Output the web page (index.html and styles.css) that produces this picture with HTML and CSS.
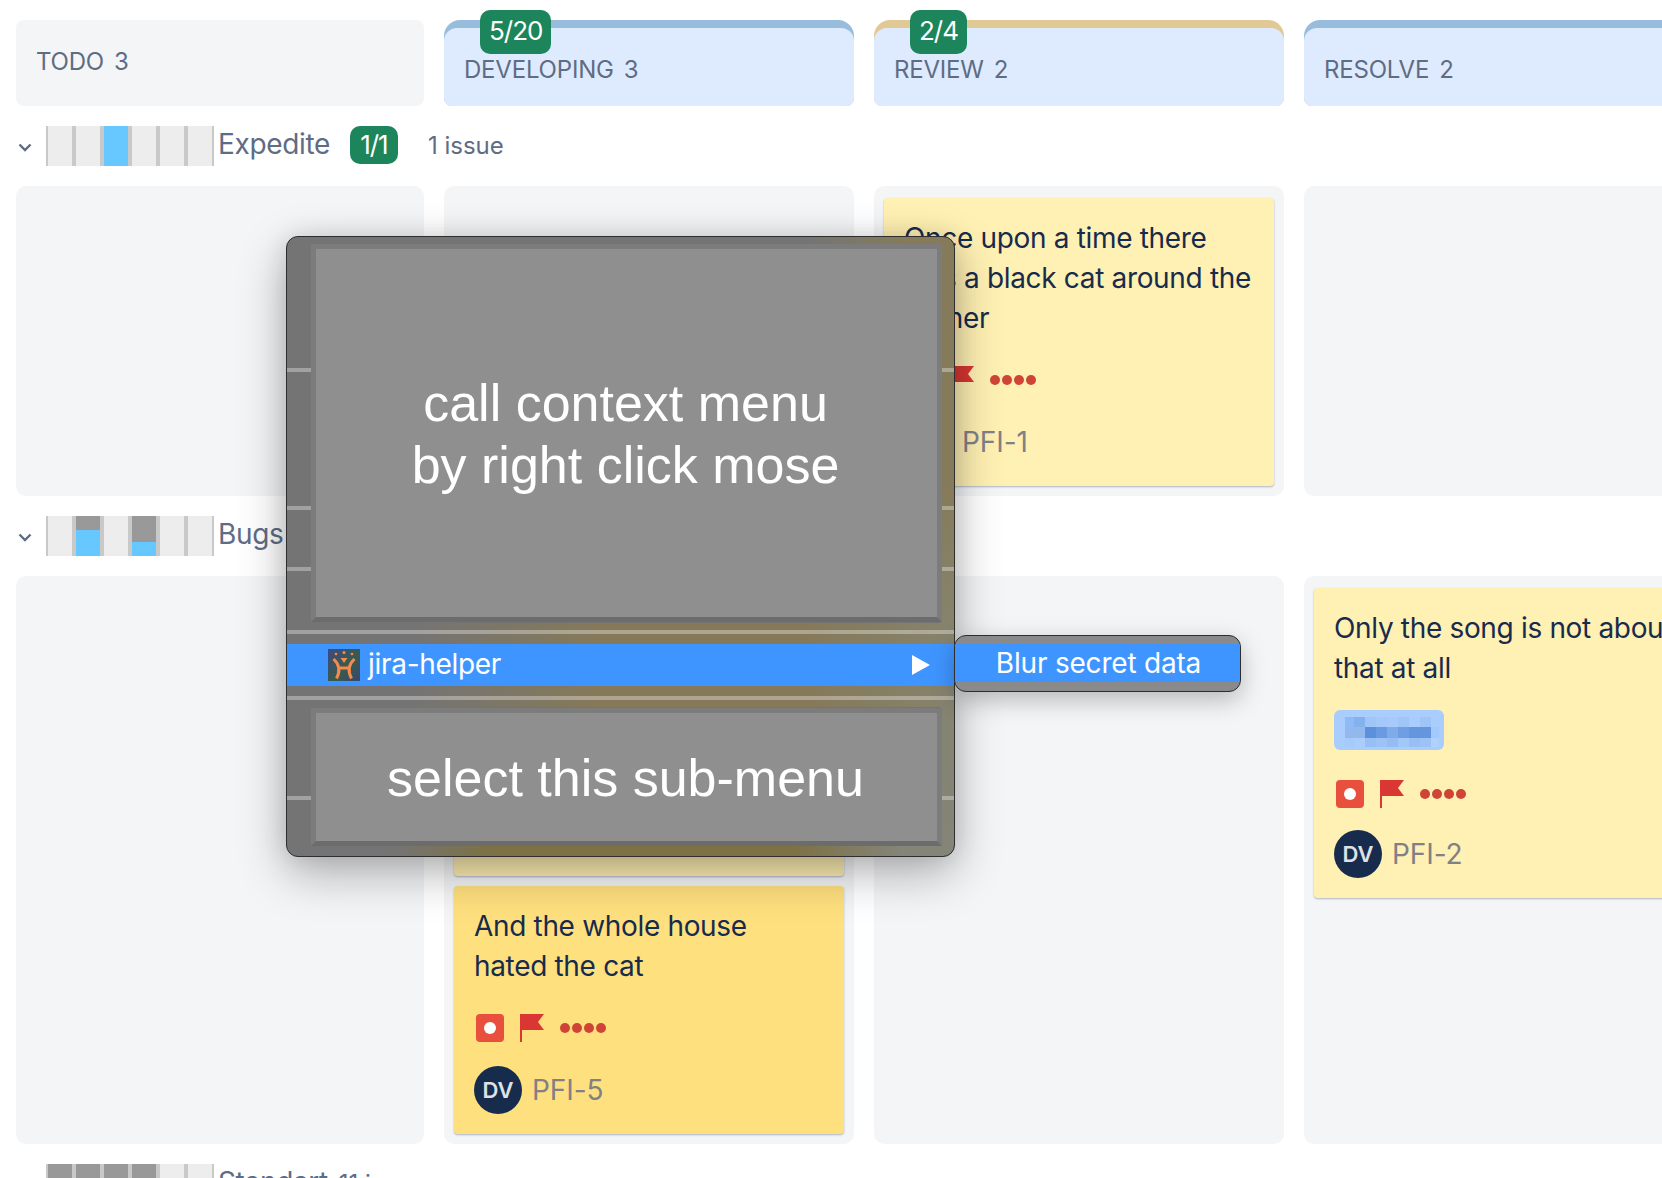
FILE: index.html
```html
<!DOCTYPE html>
<html lang="en">
<head>
  <meta charset="UTF-8">
  <title>Board</title>
  <link rel="stylesheet" href="styles.css">
</head>
<body>
  <div class="board">
    <div class="row">
      <div class="col-head plain"><div class="head-inner">Todo<span class="count">3</span></div></div>
      <div class="col-head blue">
        <span class="badge wip">5/20</span>
        <div class="head-inner">Developing<span class="count">3</span></div>
      </div>
      <div class="col-head sand">
        <span class="badge wip">2/4</span>
        <div class="head-inner">Review<span class="count">2</span></div>
      </div>
      <div class="col-head blue"><div class="head-inner">Resolve<span class="count">2</span></div></div>
    </div>

    <div class="lane">
      <svg class="chevron" width="14" height="9" viewBox="0 0 14 9"><path d="M1.5 1.5 7 7l5.5-5.5" fill="none" stroke="#5e6c84" stroke-width="2.4"/></svg>
      <div class="bar">
        <div class="cell"></div><div class="cell"></div>
        <div class="cell"><div class="fill blue-fill full"></div></div>
        <div class="cell"></div><div class="cell"></div><div class="cell"></div>
      </div>
      <span class="lane-name">Expedite</span>
      <span class="badge lane-badge">1/1</span>
      <span class="lane-issues">1 issue</span>
    </div>

    <div class="row">
      <div class="col"></div>
      <div class="col"></div>
      <div class="col">
        <div class="card pale">
          <p class="summary">Once upon a time there was a black cat around the corner</p>
          <div class="marks">
            <span class="prio"></span>
            <svg class="flag" width="24" height="28" viewBox="0 0 24 28"><path d="M0 0H24L18 8 24 16H2V28H0Z"/></svg>
            <span class="dots"><i></i><i></i><i></i><i></i></span>
          </div>
          <div class="who"><span class="avatar">DV</span><span class="key">PFI-1</span></div>
        </div>
      </div>
      <div class="col"></div>
    </div>

    <div class="lane">
      <svg class="chevron" width="14" height="9" viewBox="0 0 14 9"><path d="M1.5 1.5 7 7l5.5-5.5" fill="none" stroke="#5e6c84" stroke-width="2.4"/></svg>
      <div class="bar">
        <div class="cell"></div>
        <div class="cell"><div class="fill gray-fill third"></div><div class="fill blue-fill"></div></div>
        <div class="cell"></div>
        <div class="cell"><div class="fill gray-fill two-thirds"></div><div class="fill blue-fill"></div></div>
        <div class="cell"></div><div class="cell"></div>
      </div>
      <span class="lane-name">Bugs</span>
    </div>

    <div class="row">
      <div class="col"></div>
      <div class="col stack">
        <div class="card pale"></div>
        <div class="card deep">
          <p class="summary">And the whole house hated the cat</p>
          <div class="marks">
            <span class="prio"></span>
            <svg class="flag" width="24" height="28" viewBox="0 0 24 28"><path d="M0 0H24L18 8 24 16H2V28H0Z"/></svg>
            <span class="dots"><i></i><i></i><i></i><i></i></span>
          </div>
          <div class="who"><span class="avatar">DV</span><span class="key">PFI-5</span></div>
        </div>
      </div>
      <div class="col"></div>
      <div class="col">
        <div class="card pale">
          <p class="summary">Only the song is not about that at all</p>
          <div class="epic">
            <svg width="94" height="30" viewBox="0 0 94 30" shape-rendering="crispEdges">
              <rect x="0" y="0" width="9" height="10" fill="#8fbaf4"/><rect x="9" y="0" width="11" height="10" fill="#85b2ef"/>
              <rect x="20" y="0" width="11" height="10" fill="#a0c6f8"/><rect x="31" y="0" width="11" height="10" fill="#a3c8f9"/>
              <rect x="42" y="0" width="11" height="10" fill="#a6cafb"/><rect x="53" y="0" width="11" height="10" fill="#a0c5f8"/>
              <rect x="64" y="0" width="11" height="10" fill="#a8ccfc"/><rect x="75" y="0" width="11" height="10" fill="#9fc4f7"/>
              <rect x="86" y="0" width="8" height="10" fill="#a9cdfd"/>
              <rect x="0" y="10" width="20" height="11" fill="#93b8ed"/><rect x="20" y="10" width="11" height="11" fill="#5b91dc"/>
              <rect x="31" y="10" width="11" height="11" fill="#6a9be0"/><rect x="42" y="10" width="11" height="11" fill="#7fabe8"/>
              <rect x="53" y="10" width="11" height="11" fill="#6f9fe2"/><rect x="64" y="10" width="22" height="11" fill="#6396de"/>
              <rect x="86" y="10" width="8" height="11" fill="#a4c9fb"/>
              <rect x="0" y="21" width="9" height="9" fill="#a6cafc"/><rect x="9" y="21" width="11" height="9" fill="#abcdfc"/>
              <rect x="20" y="21" width="11" height="9" fill="#98bff4"/><rect x="31" y="21" width="11" height="9" fill="#9cc2f6"/>
              <rect x="42" y="21" width="11" height="9" fill="#96bdf3"/><rect x="53" y="21" width="11" height="9" fill="#a2c7f9"/>
              <rect x="64" y="21" width="11" height="9" fill="#98bff4"/><rect x="75" y="21" width="11" height="9" fill="#9dc3f6"/>
              <rect x="86" y="21" width="8" height="9" fill="#b0d0fe"/>
            </svg>
          </div>
          <div class="marks after-epic">
            <span class="prio"></span>
            <svg class="flag" width="24" height="28" viewBox="0 0 24 28"><path d="M0 0H24L18 8 24 16H2V28H0Z"/></svg>
            <span class="dots"><i></i><i></i><i></i><i></i></span>
          </div>
          <div class="who after-epic-who"><span class="avatar">DV</span><span class="key">PFI-2</span></div>
        </div>
      </div>
    </div>

    <div class="lane">
      <svg class="chevron" width="14" height="9" viewBox="0 0 14 9"><path d="M1.5 1.5 7 7l5.5-5.5" fill="none" stroke="#5e6c84" stroke-width="2.4"/></svg>
      <div class="bar">
        <div class="cell"><div class="fill gray-fill full"></div></div>
        <div class="cell"><div class="fill gray-fill full"></div></div>
        <div class="cell"><div class="fill gray-fill full"></div></div>
        <div class="cell"><div class="fill gray-fill full"></div></div>
        <div class="cell"></div><div class="cell"></div>
      </div>
      <span class="lane-name">Standart</span>
      <span class="lane-issues tight">11 issues</span>
    </div>
  </div>

  <div class="menu">
    <div class="section top">
      <div class="gutter left">
        <span class="tick t1"></span><span class="tick t2"></span><span class="tick t3"></span>
      </div>
      <div class="note">call context menu<br>by right click mose</div>
      <div class="gutter right">
        <span class="tick t1"></span><span class="tick t2"></span><span class="tick t3"></span>
      </div>
    </div>
    <div class="sep"></div>
    <div class="item">
      <svg class="app-icon" width="32" height="32" viewBox="0 0 32 32">
        <defs>
          <linearGradient id="iconBg" x1="0" y1="0" x2="1" y2="1">
            <stop offset="0" stop-color="#3a4a86"/>
            <stop offset="0.55" stop-color="#3b5a4c"/>
            <stop offset="1" stop-color="#37486e"/>
          </linearGradient>
        </defs>
        <rect width="32" height="32" fill="url(#iconBg)"/>
        <g fill="#f58a4c">
          <circle cx="8" cy="5" r="1.300"/><circle cx="16" cy="3.500" r="1.500"/><circle cx="24" cy="5" r="1.300"/>
          <path d="M12.500 9H19.500L16 14Z"/>
        </g>
        <g fill="none" stroke="#f58a4c" stroke-width="3">
          <path d="M5.500 10C11 15 13 21 8.500 29.500"/>
          <path d="M26.500 10C21 15 19 21 23.500 29.500"/>
          <path d="M12 19H20"/>
        </g>
      </svg>
      <span class="item-name">jira-helper</span>
      <svg class="arrow" width="18" height="20" viewBox="0 0 18 20"><path d="M0 0 18 10 0 20Z" fill="#fff"/></svg>
    </div>
    <div class="sep"></div>
    <div class="section bottom">
      <div class="gutter left"><span class="tick t4"></span></div>
      <div class="note small">select this sub-menu</div>
      <div class="gutter right"><span class="tick t4"></span></div>
    </div>
  </div>

  <div class="submenu">
    <div class="sub-item">Blur secret data</div>
  </div>
</body>
</html>
```

FILE: styles.css
```css
html, body {
  margin: 0;
  height: 100%;
  overflow: hidden;
  background-color: #fff;
}

body {
  font-family: Inter, "Noto Sans", sans-serif;
  color: #172b4d;
}

.board {
  display: flex;
  flex-direction: column;
  gap: 20px;
  width: 1700px;
  padding: 20px 0 0 16px;
}

.row {
  display: grid;
  grid-template-columns: 408px 410px 410px 410px;
  gap: 20px;
}

/* column headers */
.col-head {
  position: relative;
  height: 86px;
  box-sizing: border-box;
  border-radius: 16px 16px 8px 8px;
  font-size: 24px;
  line-height: 32px;
  letter-spacing: -0.2px;
  color: #5e6c84;
  text-transform: uppercase;
}

.col-head.plain {
  background-color: #f4f5f7;
  border-radius: 8px;
}

.col-head.blue {
  background-color: #97bcdc;
  padding-top: 8px;
}

.col-head.sand {
  background-color: #e0c994;
  padding-top: 8px;
}

.head-inner {
  height: 100%;
  box-sizing: border-box;
  padding: 26px 20px 0;
  background-color: #deebff;
  border-radius: 13px 13px 8px 8px;
}

.plain .head-inner {
  background-color: transparent;
}

.count {
  margin-left: 10px;
}

.badge {
  display: inline-block;
  box-sizing: border-box;
  background-color: #1c855c;
  color: #fff;
  font-size: 26px;
  letter-spacing: -1px;
  text-align: center;
  border-radius: 10px;
}

.badge.wip {
  position: absolute;
  top: -10px;
  left: 36px;
  height: 44px;
  line-height: 42px;
  padding: 0 9px;
}

/* swimlanes */
.lane {
  display: flex;
  align-items: center;
  height: 40px;
}

.chevron {
  width: 14px;
  margin: 2px 14px 0 2px;
  flex: none;
}

.bar {
  display: flex;
  height: 40px;
  flex: none;
}

.cell {
  display: flex;
  flex-direction: column;
  width: 24px;
  border: solid #c9c9c9;
  border-width: 0 2px;
  background-color: #ededed;
}

.fill.full {
  flex: 1;
}

.fill.blue-fill {
  flex: 1;
  background-color: #66c8ff;
}

.fill.gray-fill {
  background-color: #999;
}

.fill.third {
  height: 14px;
}

.fill.two-thirds {
  height: 26px;
}

.lane-name {
  margin: 0 0 4px 4px;
  font-size: 28px;
  letter-spacing: -0.35px;
  color: #5e6c84;
}

.lane-badge {
  align-self: flex-start;
  height: 38px;
  line-height: 38px;
  width: 48px;
  margin-left: 20px;
}

.lane-issues {
  margin: 0 0 2px 30px;
  font-size: 24px;
  color: #5e6c84;
}

.lane-issues.tight {
  margin-left: 11px;
}

/* cells and cards */
.col {
  background-color: #f4f5f7;
  border-radius: 10px;
  padding: 12px 10px 10px;
}

.col.stack {
  display: flex;
  flex-direction: column;
  gap: 10px;
}

.card {
  box-sizing: border-box;
  padding: 20px;
  height: 288px;
  border-radius: 4px;
  box-shadow: 0 1px 2px rgba(9, 30, 66, 0.3);
}

.stack .card + .card {
  height: 248px;
}

.card.pale {
  background-color: #fff0b3;
}

.card.deep {
  background-color: #ffe07f;
}

.col:last-child .card {
  height: 310px;
}

.summary {
  margin: 0;
  font-size: 28px;
  line-height: 40px;
  letter-spacing: -0.33px;
}

.marks {
  display: flex;
  align-items: center;
  gap: 16px;
  height: 28px;
  margin: 28px 0 0 2px;
}

.marks.after-epic {
  margin-top: 30px;
}

.prio {
  position: relative;
  width: 28px;
  height: 28px;
  border-radius: 4px;
  background-color: #e94f3d;
}

.prio::after {
  content: "";
  position: absolute;
  left: 8px;
  top: 8px;
  width: 12px;
  height: 12px;
  border-radius: 50%;
  background-color: #fff;
}

.flag {
  fill: #da3633;
}

.dots {
  display: flex;
  gap: 2px;
}

.dots i {
  width: 10px;
  height: 10px;
  border-radius: 50%;
  background-color: #d04437;
}

.who {
  display: flex;
  align-items: center;
  gap: 10px;
  margin-top: 24px;
}

.who.after-epic-who {
  margin-top: 22px;
}

.avatar {
  display: flex;
  align-items: center;
  justify-content: center;
  width: 48px;
  height: 48px;
  border-radius: 50%;
  background-color: #172b4d;
  color: #dfe1e6;
  font-size: 22px;
  font-weight: 600;
}

.key {
  font-size: 28px;
  letter-spacing: -0.1px;
  color: #808086;
}

.epic {
  display: flex;
  width: 110px;
  height: 40px;
  box-sizing: border-box;
  margin-top: 22px;
  padding: 7px 5px 3px 11px;
  border-radius: 6px;
  background-color: #a9cdfd;
}

/* context menu annotation lying over the board.
   the tints are the cards that would show through a frosted menu */
.menu {
  position: absolute;
  left: 286px;
  top: 236px;
  width: 669px;
  height: 621px;
  box-sizing: border-box;
  border: 1px solid #2e2e2e;
  border-radius: 12px;
  background-color: #747474;
  background-image:
    linear-gradient(90deg, transparent 78%, #857b5a 92%),
    linear-gradient(180deg, #857b5a 0, #857b5a 40%, #86836c 62%, #848478 100%),
    linear-gradient(90deg, transparent 18%, #85795a 46%, #85795a 78%, #86836c 100%),
    linear-gradient(90deg, transparent 16%, #7d7145 30%, #7d7145 76%, #848478 92%);
  background-repeat: no-repeat;
  background-size: 100% 10px, 14px 100%, 100% 84px, 100% 12px;
  background-position: 0 0, 100% 0, 0 386px, 0 100%;
  box-shadow: 0 16px 48px rgba(0, 0, 0, 0.3), 0 0 24px rgba(0, 0, 0, 0.1);
  overflow: hidden;
}

.section {
  display: flex;
}

.section.top {
  height: 393px;
  padding-top: 7px;
  box-sizing: border-box;
}

.section.bottom {
  padding-top: 8px;
}

.gutter {
  display: flex;
  flex-direction: column;
  flex: none;
}

.gutter.left {
  width: 24px;
}

.gutter.right {
  width: 12px;
}

.tick {
  display: block;
  height: 4px;
  background-color: rgba(255, 255, 255, 0.33);
}

.tick.t1 {
  margin-top: 124px;
}

.tick.t2 {
  margin-top: 134px;
}

.tick.t3 {
  margin-top: 57px;
}

.tick.t4 {
  margin-top: 88px;
}

.note {
  display: flex;
  align-items: center;
  justify-content: center;
  box-sizing: border-box;
  width: 631px;
  height: 378px;
  padding: 2px 2px 0 0;
  border: 5px solid #7c7c7c;
  border-bottom-color: #6c6c6c;
  background-color: #8f8f8f;
  color: #fff;
  font-family: "Liberation Sans", Arial, sans-serif;
  font-size: 52px;
  line-height: 62px;
  text-align: center;
}

.note.small {
  height: 138px;
}

.sep {
  height: 4px;
  background-color: rgba(255, 255, 255, 0.33);
}

.item {
  display: flex;
  align-items: center;
  gap: 8px;
  height: 42px;
  margin: 10px 0;
  padding: 0 24px 0 41px;
  background-color: #3f95ff;
  color: #fff;
  font-size: 28px;
  letter-spacing: -0.3px;
}

.item-name {
  margin-bottom: 2px;
}

.arrow {
  margin-left: auto;
}

.submenu {
  position: absolute;
  left: 954px;
  top: 635px;
  width: 287px;
  height: 57px;
  box-sizing: border-box;
  padding: 8px 0;
  border: 1px solid #2e2e2e;
  border-radius: 12px;
  background-color: #8a8a8a;
  box-shadow: 0 8px 24px rgba(0, 0, 0, 0.25);
  overflow: hidden;
}

.sub-item {
  height: 38px;
  padding-left: 2px;
  line-height: 38px;
  background-color: #3f95ff;
  color: #fff;
  font-size: 28px;
  letter-spacing: -0.2px;
  text-align: center;
}
```
